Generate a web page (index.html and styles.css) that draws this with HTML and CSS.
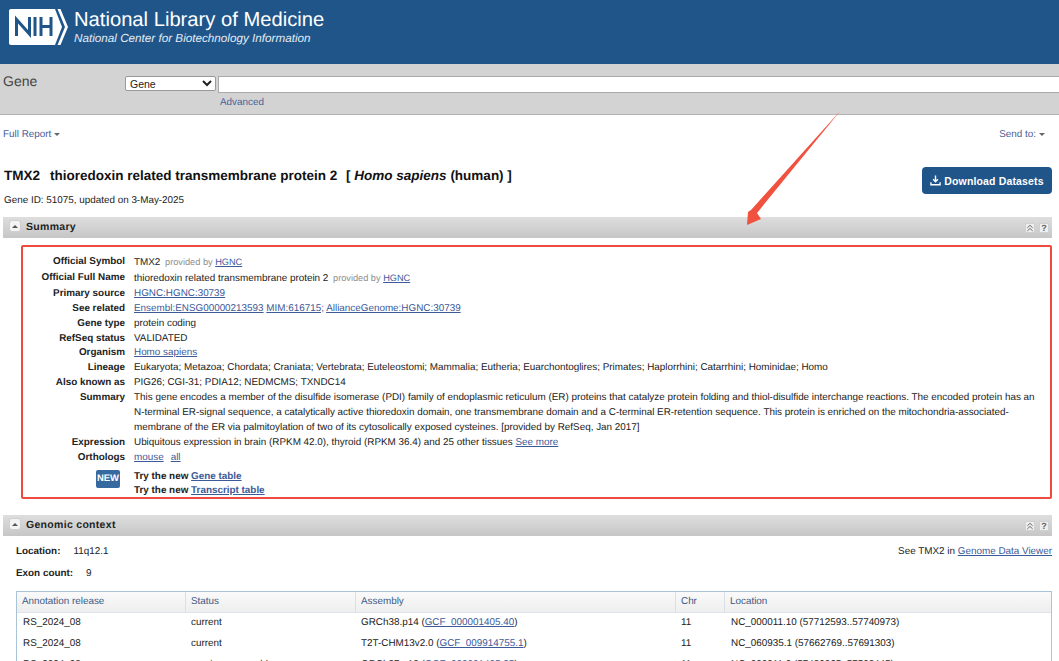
FILE: index.html
```html
<!DOCTYPE html>
<html lang="en">
<head>
<meta charset="utf-8">
<title>TMX2 thioredoxin related transmembrane protein 2 - Gene - NCBI</title>
<link rel="stylesheet" href="styles.css">
</head>
<body>
<header class="masthead">
  <svg class="nih-logo" viewBox="0 0 60 38" width="60" height="38" aria-hidden="true">
    <path d="M2 1H46L53 19L46 37H2Q0 37 0 35V3Q0 1 2 1Z" fill="#fff"/>
    <path d="M48.5 1H51.5L59 19L51.5 37H48.5L56 19Z" fill="#fff"/>
    <g fill="none" stroke="#20558a" stroke-width="3">
      <path d="M7.5 28V11.5L20.5 26V9"/>
      <path d="M26 9V28"/>
      <path d="M32 9V28M42 9V28M32 18.5H42"/>
    </g>
  </svg>
  <div class="brand">
    <div class="brand-name">National Library of Medicine</div>
    <div class="brand-sub">National Center for Biotechnology Information</div>
  </div>
</header>

<section class="searchbar">
  <div class="db-name">Gene</div>
  <select class="db-select"><option>Gene</option></select>
  <div class="search-col">
    <input class="search-input" type="text" aria-label="Search">
    <a class="advanced" href="#">Advanced</a>
  </div>
</section>

<nav class="report-bar">
  <a class="plain-link" href="#">Full Report<span class="caret"></span></a>
  <a class="plain-link" href="#">Send to:<span class="caret"></span></a>
</nav>

<main>
  <div class="title-row">
    <div>
      <h1 class="title">TMX2<span class="title-gap"></span>thioredoxin related transmembrane protein 2 <span class="organism">[ <em>Homo sapiens</em> (human) ]</span></h1>
      <p class="gene-id">Gene ID: 51075, updated on 3-May-2025</p>
    </div>
    <button class="download" type="button">
      <svg viewBox="0 0 12 12" width="11" height="11" aria-hidden="true"><path d="M6 .5V7M3.4 4.6L6 7.4L8.6 4.6M1 8V10.6H11V8" fill="none" stroke="#fff" stroke-width="1.5"/></svg>
      Download Datasets
    </button>
  </div>

  <div class="section-head">
    <span class="toggle"><span class="toggle-caret"></span></span>
    <h2>Summary</h2>
    <span class="head-tools">
      <span class="tool"><svg viewBox="0 0 9 9" width="8" height="8" aria-hidden="true"><path d="M1.5 4.3L4.5 1.5L7.5 4.3M1.5 7.8L4.5 5L7.5 7.8" fill="none" stroke="#666" stroke-width="1.1"/></svg></span>
      <span class="tool">?</span>
    </span>
  </div>

  <dl class="summary">
    <dt>Official Symbol</dt><dd>TMX2 <span class="prov">provided by <a href="#">HGNC</a></span></dd>
    <dt>Official Full Name</dt><dd>thioredoxin related transmembrane protein 2 <span class="prov">provided by <a href="#">HGNC</a></span></dd>
    <dt>Primary source</dt><dd><a href="#">HGNC:HGNC:30739</a></dd>
    <dt>See related</dt><dd><a href="#">Ensembl:ENSG00000213593</a> <a href="#">MIM:616715;</a> <a href="#">AllianceGenome:HGNC:30739</a></dd>
    <dt>Gene type</dt><dd>protein coding</dd>
    <dt>RefSeq status</dt><dd>VALIDATED</dd>
    <dt>Organism</dt><dd><a href="#">Homo sapiens</a></dd>
    <dt>Lineage</dt><dd>Eukaryota; Metazoa; Chordata; Craniata; Vertebrata; Euteleostomi; Mammalia; Eutheria; Euarchontoglires; Primates; Haplorrhini; Catarrhini; Hominidae; Homo</dd>
    <dt>Also known as</dt><dd>PIG26; CGI-31; PDIA12; NEDMCMS; TXNDC14</dd>
    <dt>Summary</dt><dd>This gene encodes a member of the disulfide isomerase (PDI) family of endoplasmic reticulum (ER) proteins that catalyze protein folding and thiol-disulfide interchange reactions. The encoded protein has an N-terminal ER-signal sequence, a catalytically active thioredoxin domain, one transmembrane domain and a C-terminal ER-retention sequence. This protein is enriched on the mitochondria-associated-membrane of the ER via palmitoylation of two of its cytosolically exposed cysteines. [provided by RefSeq, Jan 2017]</dd>
    <dt>Expression</dt><dd>Ubiquitous expression in brain (RPKM 42.0), thyroid (RPKM 36.4) and 25 other tissues <a href="#">See more</a></dd>
    <dt>Orthologs</dt><dd><a href="#">mouse</a><span class="gap"></span><a href="#">all</a></dd>
    <dt class="new-cell"><span class="new-badge">NEW</span></dt>
    <dd class="try"><b>Try the new</b> <a href="#">Gene table</a><br><b>Try the new</b> <a href="#">Transcript table</a></dd>
  </dl>

  <div class="section-head second">
    <span class="toggle"><span class="toggle-caret"></span></span>
    <h2>Genomic context</h2>
    <span class="head-tools">
      <span class="tool"><svg viewBox="0 0 9 9" width="8" height="8" aria-hidden="true"><path d="M1.5 4.3L4.5 1.5L7.5 4.3M1.5 7.8L4.5 5L7.5 7.8" fill="none" stroke="#666" stroke-width="1.1"/></svg></span>
      <span class="tool">?</span>
    </span>
  </div>

  <div class="context">
    <div class="context-top">
      <div class="facts">
        <div class="fact"><b>Location:</b><span>11q12.1</span></div>
        <div class="fact"><b>Exon count:</b><span>9</span></div>
      </div>
      <div>See TMX2 in <a href="#">Genome Data Viewer</a></div>
    </div>
    <table class="assemblies">
      <colgroup><col class="c1"><col class="c2"><col class="c3"><col class="c4"><col></colgroup>
      <thead><tr><th>Annotation release</th><th>Status</th><th>Assembly</th><th>Chr</th><th>Location</th></tr></thead>
      <tbody>
        <tr><td>RS_2024_08</td><td>current</td><td>GRCh38.p14 (<a href="#">GCF_000001405.40</a>)</td><td>11</td><td>NC_000011.10 (57712593..57740973)</td></tr>
        <tr><td>RS_2024_08</td><td>current</td><td>T2T-CHM13v2.0 (<a href="#">GCF_009914755.1</a>)</td><td>11</td><td>NC_060935.1 (57662769..57691303)</td></tr>
        <tr><td>RS_2024_08</td><td>previous assembly</td><td>GRCh37.p13 (<a href="#">GCF_000001405.25</a>)</td><td>11</td><td>NC_000011.9 (57480065..57508445)</td></tr>
      </tbody>
    </table>
  </div>
</main>

<svg class="arrow" viewBox="0 0 100 120" width="100" height="120" aria-hidden="true">
  <path d="M96 1L12 104L16 110L2 116L3 103L6 101Z" fill="#f1523f"/>
</svg>
</body>
</html>
```

FILE: styles.css
```css
* { box-sizing: border-box; }
html, body { margin: 0; height: 661px; overflow: hidden; }
body {
  position: relative;
  background: #fff;
  color: #222;
  font-family: "Liberation Sans", Arial, sans-serif;
  font-size: 9.9px;
  line-height: 14.9px;
  text-rendering: geometricPrecision;
}
a { color: #3d5a98; text-decoration: underline; }

.masthead {
  height: 64px;
  background: #20558a;
  display: flex;
  align-items: flex-start;
  gap: 5px;
  padding: 8px 0 0 9px;
  color: #fff;
}
.nih-logo { flex: none; }
.brand-name { font-size: 20.2px; line-height: 24px; }
.brand-sub { font-size: 11.7px; line-height: 14px; font-style: italic; color: #e4ecf4; }

.searchbar {
  height: 51px;
  background: #d3d3d3;
  border-bottom: 1px solid #b4b4b4;
  display: flex;
  align-items: flex-start;
  padding: 12px 0 0 3px;
}
.db-name { width: 122px; font-size: 14px; line-height: 11px; color: #444; }
.db-select {
  width: 91px; height: 15px; margin: 0 2px 0 0; padding: 0;
  font: 10.5px "Liberation Sans", Arial, sans-serif; color: #222;
  background: #fff; border: 1px solid #999; border-radius: 2px;
}
.search-col { flex: 1; margin-right: -4px; }
.search-input { display: block; width: 100%; height: 17px; background: #fff; border: 1px solid #aaa; padding: 0; }
.advanced { display: block; margin: 3px 0 0 2px; line-height: 14px; text-decoration: none; color: #4a5f96; }

.report-bar {
  display: flex; justify-content: space-between;
  padding: 13px 14px 0 3px; height: 51px;
}
.plain-link { text-decoration: none; color: #4a6098; }
.caret {
  display: inline-block; width: 0; height: 0; margin-left: 3px; vertical-align: 1px;
  border: 3px solid transparent; border-top-color: #666; border-bottom: 0;
}

main { padding: 0 7px 0 3px; }
.title-row { display: flex; justify-content: space-between; align-items: flex-start; height: 51px; }
.title { margin: 1px 0 0 1px; font-size: 13.5px; line-height: 18px; font-weight: bold; color: #111; }
.title-gap { display: inline-block; width: 10px; }
.organism { margin-left: 5px; }
.title em { font-style: italic; font-weight: bold; }
.gene-id { margin: 9px 0 0 1px; line-height: 14px; }
.download {
  width: 130px; height: 27px; margin: 1px 0 0 0;
  background: #20558a; color: #fff; border: 0; border-radius: 4px;
  font: bold 10.5px "Liberation Sans", Arial, sans-serif; letter-spacing: .15px;
  display: flex; align-items: center; justify-content: center; gap: 3px;
}

.section-head {
  height: 21px;
  background: linear-gradient(#dedede, #c6c6c6);
  display: flex; align-items: center;
  padding: 0 3px 0 7px;
}
.section-head h2 { margin: 0 0 0 6px; font-size: 10.5px; letter-spacing: .3px; line-height: 21px; font-weight: bold; color: #222; }
.toggle {
  width: 10px; height: 10px; margin-top: -3px; background: #f3f3f3; border-radius: 2px;
  display: flex; align-items: center; justify-content: center; box-shadow: 0 0 0 1px #d0d0d0;
}
.toggle-caret { width: 0; height: 0; border: 3px solid transparent; border-bottom-color: #555; border-top: 0; }
.head-tools { margin-left: auto; display: flex; gap: 4px; }
.tool {
  width: 10px; height: 10px; background: #eee; border: 1px solid #d0d0d0; margin-top: 1px;
  display: flex; align-items: center; justify-content: center;
  font-size: 9px; font-weight: bold; color: #666; line-height: 9px;
}

.summary {
  display: grid;
  grid-template-columns: 102px 1fr;
  column-gap: 9px;
  margin: 7px 0 0 18px;
  width: 1031px;
  height: 254px;
  border: 2px solid #ee4b3e;
  border-radius: 2px;
  padding: 8px 6px 0 0;
  align-content: start;
}
.summary dt { font-weight: bold; text-align: right; margin: 0; color: #222; }
.summary dd { margin: 0; }
.prov { color: #8c8c8c; margin-left: 2px; font-size: 9.2px; }
.gap { display: inline-block; width: 7px; }
.summary .new-cell { margin-top: 4px; display: flex; justify-content: flex-end; padding-right: 5px; }
.new-badge {
  width: 24px; height: 18px; background: #36699f; color: #fff; border-radius: 2px;
  font-size: 9.5px; line-height: 18px; text-align: center;
}
.summary .try { margin-top: 4px; line-height: 14.5px; }
.try b { font-weight: bold; }
.try a { font-weight: bold; }

.second { margin-top: 16px; }

.context { padding: 0 0 0 13px; }
.context-top { display: flex; justify-content: space-between; align-items: flex-start; padding-top: 9px; height: 55px; }
.fact { display: flex; height: 22px; gap: 13px; }
.fact b { font-weight: bold; }

.assemblies {
  width: 1036px; border-collapse: separate; border-spacing: 0; table-layout: fixed;
  border: 1px solid #a9c3d8; border-bottom: 0;
}
.c1 { width: 169px; } .c2 { width: 170px; } .c3 { width: 320px; } .c4 { width: 49px; }
.assemblies th {
  height: 21px; text-align: left; font-weight: normal; color: #3d5a85; padding: 0 0 0 5px;
  background: linear-gradient(#fafafa, #eeeeee);
  border-right: 1px solid #d9dfe4; border-bottom: 1px solid #dde3e8;
}
.assemblies th:last-child { border-right: 0; }
.assemblies td { height: 21px; padding: 0 0 0 6px; }
.assemblies td:nth-child(n+2):not(:last-child) { padding-left: 5px; }

.arrow { position: absolute; left: 745px; top: 109px; pointer-events: none; }
```
